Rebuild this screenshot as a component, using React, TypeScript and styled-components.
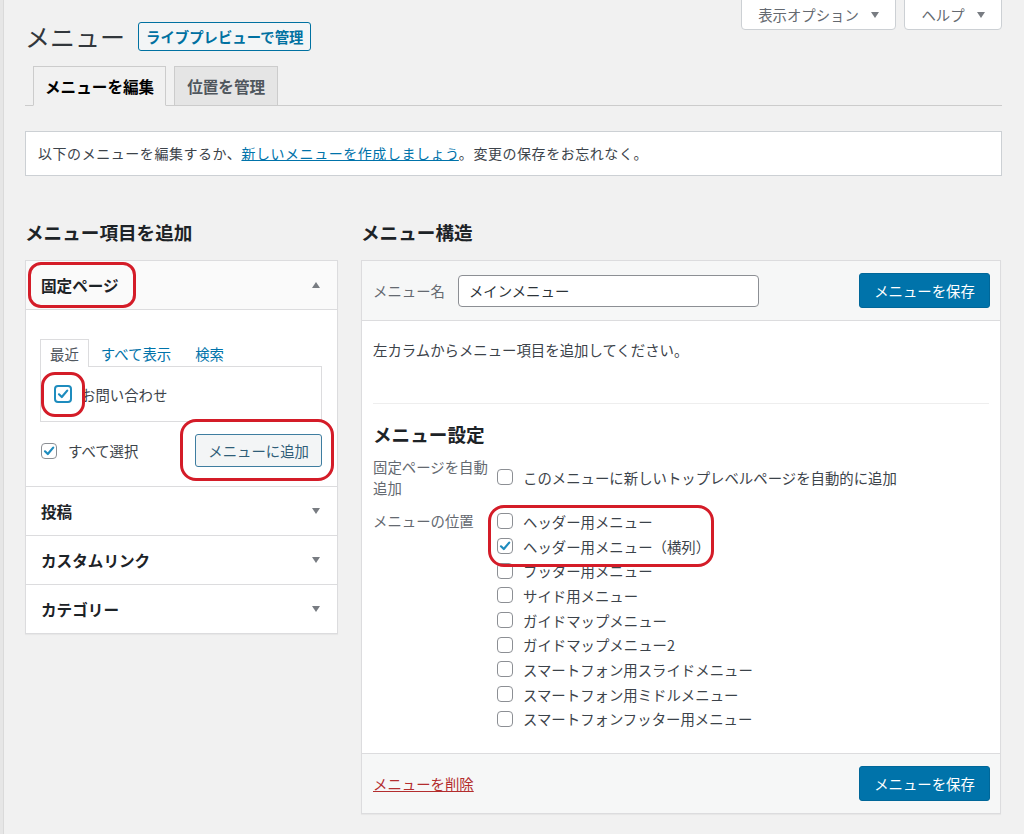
import styled, { createGlobalStyle } from "styled-components";

const GlobalStyle = createGlobalStyle`
  html, body {
    margin: 0;
    padding: 0;
    height: 834px;
    overflow: hidden;
    background: #e6e6e6;
  }
  body {
    font-family: "Noto Sans CJK JP", "Noto Sans", sans-serif;
    font-size: 14.4px;
    color: #3c434a;
  }
`;

const Page = styled.div`
  margin-left: 3px;
  border-left: 1px solid #dadada;
  background: #f1f1f1;
  min-height: 834px;
  padding: 0 22px 0 21px;
  box-sizing: border-box;
`;

const TopBar = styled.div`
  display: flex;
  justify-content: space-between;
  align-items: flex-start;
`;

const TitleRow = styled.div`
  display: flex;
  align-items: center;
  gap: 13px;
  padding-top: 22px;
`;

const Title = styled.h1`
  margin: 0;
  font-size: 25px;
  font-weight: 400;
  line-height: 29px;
  color: #32373c;
`;

const OutlineButton = styled.button`
  font-family: inherit;
  font-size: 14.4px;
  font-weight: 600;
  line-height: 27px;
  height: 29px;
  padding: 0 7px;
  color: #0071a1;
  background: #f3f5f6;
  border: 1px solid #0071a1;
  border-radius: 3px;
`;

const ScreenLinks = styled.div`
  display: flex;
  gap: 8px;
  margin-top: -1px;
`;

const MetaButton = styled.button<{ $w: number }>`
  width: ${(p) => p.$w}px;
  height: 31px;
  font-family: inherit;
  font-size: 14.4px;
  color: #646970;
  background: #fff;
  border: 1px solid #ccd0d4;
  border-radius: 0 0 4px 4px;
  display: flex;
  align-items: center;
  justify-content: center;
  gap: 12px;
  padding: 0;
`;

const DownArrow = styled.span`
  width: 0;
  height: 0;
  border-left: 4.5px solid transparent;
  border-right: 4.5px solid transparent;
  border-top: 6px solid #787c82;
`;

const UpArrow = styled.span`
  width: 0;
  height: 0;
  border-left: 4.5px solid transparent;
  border-right: 4.5px solid transparent;
  border-bottom: 6px solid #787c82;
`;

const TabNav = styled.div`
  display: flex;
  gap: 8px;
  margin-top: 15px;
  padding-left: 8px;
  border-bottom: 1px solid #ccc;
`;

const Tab = styled.div<{ $active?: boolean }>`
  font-size: 15.6px;
  font-weight: 700;
  line-height: 24px;
  padding: 7px ${(p) => (p.$active ? 11 : 12)}px;
  margin-bottom: -1px;
  border: 1px solid #ccc;
  border-bottom-color: ${(p) => (p.$active ? "#f1f1f1" : "#ccc")};
  background: ${(p) => (p.$active ? "#f1f1f1" : "#e5e5e5")};
  color: ${(p) => (p.$active ? "#000" : "#50575e")};
`;

const Notice = styled.div`
  margin-top: 25px;
  background: #fff;
  border: 1px solid #ccd0d4;
  padding: 11px 12px;
  line-height: 21px;
  color: #3c434a;
  font-size: 14px;
  letter-spacing: 0.55px;
`;

const Link = styled.a`
  color: #0073aa;
  text-decoration: underline;
`;

const Columns = styled.div`
  display: grid;
  grid-template-columns: 313px 640px;
  gap: 23px;
  margin-top: 44px;
  align-items: start;
`;

const SectionHeading = styled.h2`
  margin: 0 0 16px;
  font-size: 18.6px;
  font-weight: 700;
  line-height: 24px;
  color: #1d2327;
`;

const Panel = styled.div`
  position: relative;
  background: #fff;
  border: 1px solid #dcdcde;
  box-shadow: 0 1px 1px rgba(0, 0, 0, 0.04);
`;

const AccordionHeader = styled.div<{ $open?: boolean }>`
  position: relative;
  height: 48px;
  display: flex;
  align-items: center;
  justify-content: space-between;
  padding: 0 17px 0 15px;
  font-size: 15.6px;
  font-weight: 700;
  color: #1d2327;
  background: ${(p) => (p.$open ? "#fafafa" : "#fff")};
  border-top: ${(p) => (p.$open ? "none" : "1px solid #dcdcde")};
  border-bottom: ${(p) => (p.$open ? "1px solid #dcdcde" : "none")};
`;

const AccordionBody = styled.div`
  padding: 29px 15px 19px 14px;
`;

const MiniTabs = styled.div`
  display: flex;
  align-items: flex-end;
`;

const MiniTab = styled.span<{ $active?: boolean }>`
  line-height: 27px;
  padding: 0 ${(p) => (p.$active ? 9 : 11)}px;
  color: ${(p) => (p.$active ? "#50575e" : "#0073aa")};
  background: ${(p) => (p.$active ? "#fff" : "transparent")};
  border: 1px solid ${(p) => (p.$active ? "#dcdcde" : "transparent")};
  border-bottom: none;
  margin-bottom: -1px;
  position: relative;
`;

const TabsPanel = styled.div`
  height: 54px;
  border: 1px solid #dcdcde;
  background: #fff;
  display: flex;
  align-items: center;
  padding-left: 13px;
`;

const CheckRow = styled.label<{ $gap?: number }>`
  display: flex;
  align-items: center;
  gap: ${(p) => p.$gap ?? 10}px;
  color: #3c434a;
  line-height: 21px;
`;

const Box = styled.span<{ $focus?: boolean }>`
  position: relative;
  flex: none;
  box-sizing: border-box;
  width: ${(p) => (p.$focus ? 18 : 16)}px;
  height: ${(p) => (p.$focus ? 18 : 16)}px;
  border: ${(p) => (p.$focus ? "2px solid #1e8cbe" : "1px solid #8c8f94")};
  border-radius: 4px;
  background: #fff;
  display: flex;
  align-items: center;
  justify-content: center;
`;

const Annotation = styled.span<{ $l: number; $t: number; $w: number; $h: number; $r?: number }>`
  position: absolute;
  left: ${(p) => p.$l}px;
  top: ${(p) => p.$t}px;
  width: ${(p) => p.$w}px;
  height: ${(p) => p.$h}px;
  box-sizing: border-box;
  border: 3px solid #d41c28;
  border-radius: ${(p) => p.$r ?? 14}px;
  pointer-events: none;
  z-index: 2;
`;

const BoxWrap = styled.span`
  position: relative;
  display: flex;
`;

const PanelFooter = styled.div`
  display: flex;
  justify-content: space-between;
  align-items: center;
  margin-top: 12px;
  padding-left: 1px;
`;

const AddButton = styled.button`
  position: relative;
  font-family: inherit;
  font-size: 14.4px;
  height: 33px;
  padding: 0 12px;
  color: #2f5d78;
  background: #f3f5f6;
  border: 1px solid #3e7da0;
  border-radius: 3px;
`;

const MenuHeader = styled.div`
  height: 59px;
  background: #f6f7f7;
  border-bottom: 1px solid #dcdcde;
  display: flex;
  align-items: center;
  padding: 0 10px 0 11px;
  gap: 13px;
`;

const FieldLabel = styled.span`
  color: #646970;
`;

const NameInput = styled.div`
  box-sizing: border-box;
  width: 301px;
  height: 32px;
  border: 1px solid #8c8f94;
  border-radius: 4px;
  background: #fff;
  padding: 0 10px;
  line-height: 30px;
  color: #2c3338;
`;

const PrimaryButton = styled.button`
  margin-left: auto;
  font-family: inherit;
  font-size: 14.4px;
  width: 131px;
  height: 35px;
  color: #fff;
  background: #0073aa;
  border: 1px solid #006799;
  border-radius: 3px;
`;

const MenuBody = styled.div`
  padding: 18px 11px 22px 11px;
`;

const Hint = styled.p`
  margin: 0;
  line-height: 21px;
  color: #3c434a;
`;

const Divider = styled.hr`
  margin: 43px 0 0;
  border: none;
  border-top: 1px solid #eee;
`;

const SettingsHeading = styled.h3`
  margin: 18px 0 0;
  font-size: 18.6px;
  font-weight: 700;
  line-height: 24px;
  color: #1d2327;
`;

const SettingGrid = styled.div<{ $top: number }>`
  display: grid;
  grid-template-columns: 118px 1fr;
  column-gap: 6px;
  margin-top: ${(p) => p.$top}px;
`;

const SettingLabel = styled.div<{ $lh: number }>`
  color: #646970;
  line-height: ${(p) => p.$lh}px;
`;

const LocationList = styled.div`
  position: relative;
  display: flex;
  flex-direction: column;
  align-self: start;
`;

const LocationRow = styled(CheckRow)`
  height: 24.7px;
`;

const MenuFooter = styled.div`
  height: 59px;
  background: #f6f7f7;
  border-top: 1px solid #dcdcde;
  display: flex;
  align-items: center;
  padding: 0 10px 0 11px;
`;

const DeleteLink = styled.a`
  color: #b32d2e;
  text-decoration: underline;
`;

const Check = ({ checked, focus }: { checked?: boolean; focus?: boolean }) => (
  <Box $focus={focus}>
    {checked && (
      <svg width="12" height="12" viewBox="0 0 12 12">
        <path d="M2 6.3 L4.8 9 L10.2 2.6" fill="none" stroke="#1e8cbe" strokeWidth="2.2" strokeLinecap="round" strokeLinejoin="round" />
      </svg>
    )}
  </Box>
);

const locations = [
  { name: "ヘッダー用メニュー", checked: false },
  { name: "ヘッダー用メニュー（横列）", checked: true },
  { name: "フッター用メニュー", checked: false },
  { name: "サイド用メニュー", checked: false },
  { name: "ガイドマップメニュー", checked: false },
  { name: "ガイドマップメニュー2", checked: false },
  { name: "スマートフォン用スライドメニュー", checked: false },
  { name: "スマートフォン用ミドルメニュー", checked: false },
  { name: "スマートフォンフッター用メニュー", checked: false },
];

const closedSections = ["投稿", "カスタムリンク", "カテゴリー"];

const App = () => {
  return (
    <>
      <GlobalStyle />
      <Page>
        <TopBar>
          <TitleRow>
            <Title>メニュー</Title>
            <OutlineButton>ライブプレビューで管理</OutlineButton>
          </TitleRow>
          <ScreenLinks>
            <MetaButton $w={155}>
              表示オプション <DownArrow />
            </MetaButton>
            <MetaButton $w={98}>
              ヘルプ <DownArrow />
            </MetaButton>
          </ScreenLinks>
        </TopBar>

        <TabNav>
          <Tab $active>メニューを編集</Tab>
          <Tab>位置を管理</Tab>
        </TabNav>

        <Notice>
          以下のメニューを編集するか、<Link>新しいメニューを作成しましょう</Link>。変更の保存をお忘れなく。
        </Notice>

        <Columns>
          <div>
            <SectionHeading>メニュー項目を追加</SectionHeading>
            <Panel>
              <AccordionHeader $open>
                固定ページ
                <UpArrow />
                <Annotation $l={2} $t={1} $w={108} $h={46} $r={13} />
              </AccordionHeader>
              <AccordionBody>
                <MiniTabs>
                  <MiniTab $active>最近</MiniTab>
                  <MiniTab>すべて表示</MiniTab>
                  <MiniTab>検索</MiniTab>
                </MiniTabs>
                <TabsPanel>
                  <CheckRow $gap={9}>
                    <BoxWrap>
                      <Check checked focus />
                      <Annotation $l={-13} $t={-13} $w={44} $h={45} $r={14} />
                    </BoxWrap>
                    お問い合わせ
                  </CheckRow>
                </TabsPanel>
                <PanelFooter>
                  <CheckRow $gap={11}>
                    <Check checked />
                    すべて選択
                  </CheckRow>
                  <AddButton>
                    メニューに追加
                    <Annotation $l={-16} $t={-16} $w={154} $h={62} $r={16} />
                  </AddButton>
                </PanelFooter>
              </AccordionBody>
              {closedSections.map((s) => (
                <AccordionHeader key={s}>
                  {s}
                  <DownArrow />
                </AccordionHeader>
              ))}
            </Panel>
          </div>

          <div>
            <SectionHeading>メニュー構造</SectionHeading>
            <Panel>
              <MenuHeader>
                <FieldLabel>メニュー名</FieldLabel>
                <NameInput>メインメニュー</NameInput>
                <PrimaryButton>メニューを保存</PrimaryButton>
              </MenuHeader>
              <MenuBody>
                <Hint>左カラムからメニュー項目を追加してください。</Hint>
                <Divider />
                <SettingsHeading>メニュー設定</SettingsHeading>
                <SettingGrid $top={10}>
                  <SettingLabel $lh={21}>固定ページを自動追加</SettingLabel>
                  <CheckRow>
                    <Check />
                    このメニューに新しいトップレベルページを自動的に追加
                  </CheckRow>
                </SettingGrid>
                <SettingGrid $top={11}>
                  <SettingLabel $lh={24.7}>メニューの位置</SettingLabel>
                  <LocationList>
                    {locations.map((l) => (
                      <LocationRow key={l.name}>
                        <Check checked={l.checked} />
                        {l.name}
                      </LocationRow>
                    ))}
                    <Annotation $l={-9} $t={-4} $w={226} $h={62} $r={16} />
                  </LocationList>
                </SettingGrid>
              </MenuBody>
              <MenuFooter>
                <DeleteLink>メニューを削除</DeleteLink>
                <PrimaryButton>メニューを保存</PrimaryButton>
              </MenuFooter>
            </Panel>
          </div>
        </Columns>
      </Page>
    </>
  );
};

export default App;
